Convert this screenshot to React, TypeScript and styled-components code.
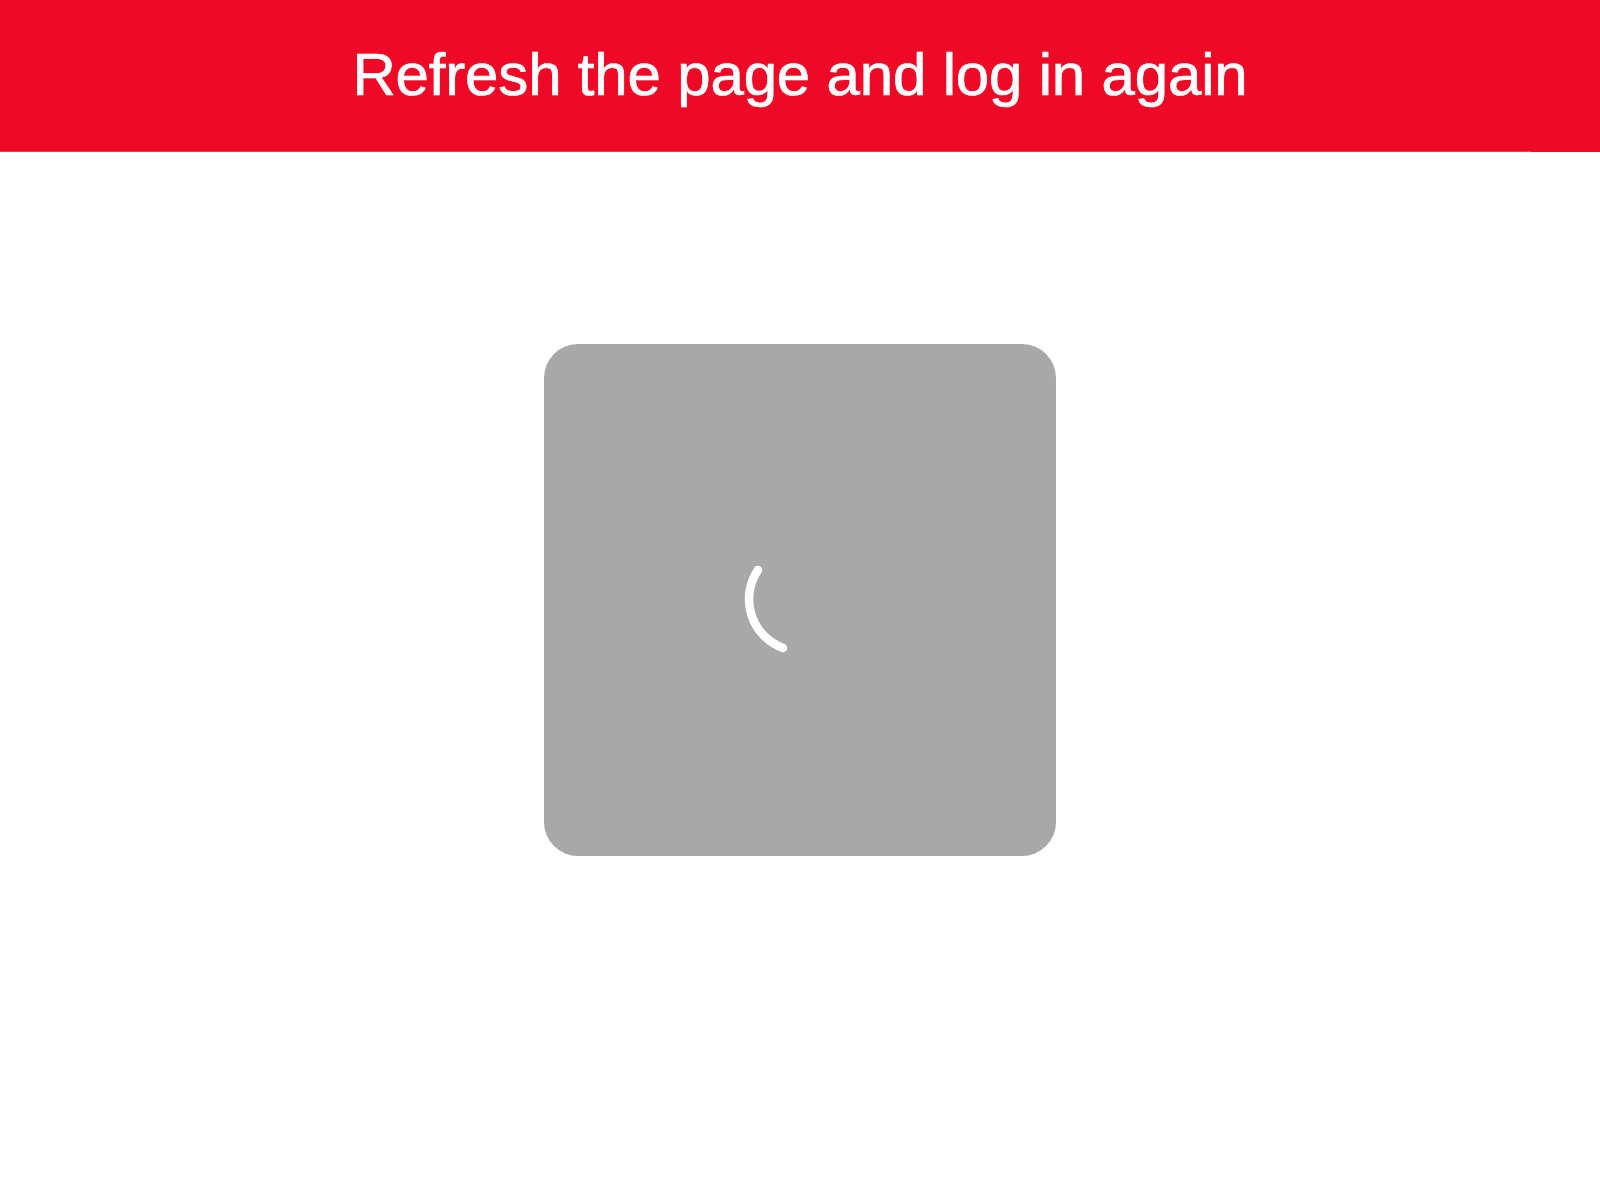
import styled, { createGlobalStyle } from 'styled-components';

const GlobalStyle = createGlobalStyle`
  html, body {
    margin: 0;
    padding: 0;
    background: #fff;
    font-family: "Liberation Sans", Arial, sans-serif;
  }
`;

const Page = styled.div`
  position: relative;
  display: flex;
  flex-direction: column;
  height: 1200px;
  overflow: hidden;
`;
const Banner = styled.div`
  position: relative;
  display: flex;
  align-items: center;
  justify-content: center;
  box-sizing: border-box;
  height: 152px;
  padding-bottom: 4px;
  background-color: #ee0a27;
  color: #fff;
  font-size: 60px;
  letter-spacing: -0.17px;
  -webkit-text-stroke: 0.7px #fff;
`;
const BannerEdge = styled.div`
  position: absolute;
  left: 0;
  bottom: 0;
  width: 1531px;
  height: 1px;
  background-color: rgba(255, 255, 255, 0.2);
`;
const Overlay = styled.div`
  position: absolute;
  inset: 0;
  display: flex;
  align-items: center;
  justify-content: center;
`;
const LoaderBox = styled.div`
  display: flex;
  align-items: center;
  justify-content: center;
  width: 512px;
  height: 512px;
  border-radius: 34px;
  background-color: #a8a8a8;
`;

export default function App() {
  return (
    <Page>
      <GlobalStyle />
      <Banner>
        Refresh the page and log in again
        <BannerEdge />
      </Banner>
      <Overlay>
        <LoaderBox>
          <svg width="120" height="120" viewBox="0 0 120 120" fill="none">
            <path d="M18 30A52 52 0 0 0 43 108" stroke="#fff" strokeWidth="8.5" strokeLinecap="round" />
          </svg>
        </LoaderBox>
      </Overlay>
    </Page>
  );
}
